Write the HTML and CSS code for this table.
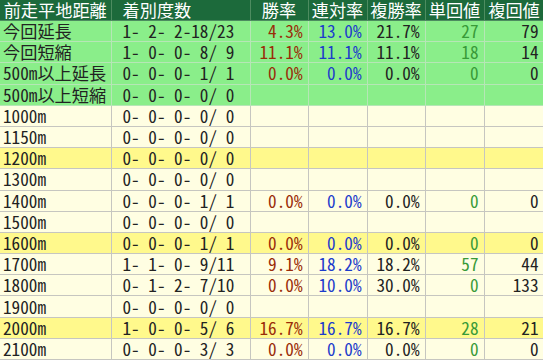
FILE: index.html
```html
<!DOCTYPE html>
<html lang="ja">
<head>
<meta charset="utf-8">
<title>前走平地距離</title>
<link rel="stylesheet" href="styles.css">
</head>
<body>
<table class="stats">
  <colgroup>
    <col class="c-label"><col class="c-rec"><col class="c-p1"><col class="c-p2"><col class="c-p3"><col class="c-v1"><col class="c-v2">
  </colgroup>
  <thead>
    <tr class="head">
      <th>前走平地距離</th><th class="rec-h">着別度数</th><th>勝率</th><th>連対率</th><th>複勝率</th><th>単回値</th><th>複回値</th>
    </tr>
  </thead>
  <tbody>
    <tr class="green"><td class="label">今回延長</td><td class="rec">1- 2- 2-18/23</td><td class="win">4.3%</td><td class="ren">13.0%</td><td class="fuku">21.7%</td><td class="tan">27</td><td class="fv">79</td></tr>
    <tr class="green"><td class="label">今回短縮</td><td class="rec">1- 0- 0- 8/ 9</td><td class="win">11.1%</td><td class="ren">11.1%</td><td class="fuku">11.1%</td><td class="tan">18</td><td class="fv">14</td></tr>
    <tr class="green"><td class="label">500m以上延長</td><td class="rec">0- 0- 0- 1/ 1</td><td class="win">0.0%</td><td class="ren">0.0%</td><td class="fuku">0.0%</td><td class="tan">0</td><td class="fv">0</td></tr>
    <tr class="green"><td class="label">500m以上短縮</td><td class="rec">0- 0- 0- 0/ 0</td><td></td><td></td><td></td><td></td><td></td></tr>
    <tr class="light"><td class="label">1000m</td><td class="rec">0- 0- 0- 0/ 0</td><td></td><td></td><td></td><td></td><td></td></tr>
    <tr class="light"><td class="label">1150m</td><td class="rec">0- 0- 0- 0/ 0</td><td></td><td></td><td></td><td></td><td></td></tr>
    <tr class="hi"><td class="label">1200m</td><td class="rec">0- 0- 0- 0/ 0</td><td></td><td></td><td></td><td></td><td></td></tr>
    <tr class="light"><td class="label">1300m</td><td class="rec">0- 0- 0- 0/ 0</td><td></td><td></td><td></td><td></td><td></td></tr>
    <tr class="light"><td class="label">1400m</td><td class="rec">0- 0- 0- 1/ 1</td><td class="win">0.0%</td><td class="ren">0.0%</td><td class="fuku">0.0%</td><td class="tan">0</td><td class="fv">0</td></tr>
    <tr class="light"><td class="label">1500m</td><td class="rec">0- 0- 0- 0/ 0</td><td></td><td></td><td></td><td></td><td></td></tr>
    <tr class="hi"><td class="label">1600m</td><td class="rec">0- 0- 0- 1/ 1</td><td class="win">0.0%</td><td class="ren">0.0%</td><td class="fuku">0.0%</td><td class="tan">0</td><td class="fv">0</td></tr>
    <tr class="light"><td class="label">1700m</td><td class="rec">1- 1- 0- 9/11</td><td class="win">9.1%</td><td class="ren">18.2%</td><td class="fuku">18.2%</td><td class="tan">57</td><td class="fv">44</td></tr>
    <tr class="light"><td class="label">1800m</td><td class="rec">0- 1- 2- 7/10</td><td class="win">0.0%</td><td class="ren">10.0%</td><td class="fuku">30.0%</td><td class="tan">0</td><td class="fv">133</td></tr>
    <tr class="light"><td class="label">1900m</td><td class="rec">0- 0- 0- 0/ 0</td><td></td><td></td><td></td><td></td><td></td></tr>
    <tr class="hi"><td class="label">2000m</td><td class="rec">1- 0- 0- 5/ 6</td><td class="win">16.7%</td><td class="ren">16.7%</td><td class="fuku">16.7%</td><td class="tan">28</td><td class="fv">21</td></tr>
    <tr class="light"><td class="label">2100m</td><td class="rec">0- 0- 0- 3/ 3</td><td class="win">0.0%</td><td class="ren">0.0%</td><td class="fuku">0.0%</td><td class="tan">0</td><td class="fv">0</td></tr>
  </tbody>
</table>
</body>
</html>
```
FILE: styles.css
```css
html, body {
  margin: 0;
  padding: 0;
  background: #ffffff;
}

.stats {
  border-collapse: collapse;
  table-layout: fixed;
  width: 544px;
  height: 360px;
  font-family: "Noto Sans CJK JP", sans-serif;
  font-size: 17.2px;
  font-feature-settings: "hwid" 1;
  line-height: 20px;
  white-space: pre;
  color: #222222;
}

.c-label { width: 111px; }
.c-rec { width: 139px; }
.c-p1 { width: 58px; }
.c-p2 { width: 59px; }
.c-p3 { width: 58px; }
.c-v1 { width: 59px; }
.c-v2 { width: 60px; }

.stats th,
.stats td {
  padding: 0 5px 0 2px;
  border: 1px solid #c6c6c0;
  text-align: right;
  vertical-align: middle;
}

.stats .head th {
  background: #1c6a3b;
  color: #ffffff;
  font-weight: normal;
  text-align: center;
  padding: 0;
  border: 1px solid #4d8c60;
  border-top: none;
}

.stats .head th:first-child { border-left: none; }
.stats .head th.rec-h { text-align: left; padding-left: 11px; }

.stats td.label {
  text-align: left;
  padding-left: 3px;
  border-left: none;
}

.stats td.rec {
  text-align: left;
  padding-left: 11px;
}

.green td {
  background: #8aee8a;
  border-color: #b6e6b6;
}

.light td { background: #fffee2; }
.hi td { background: #fff98c; }

.win { color: #9a2c08; }
.ren { color: #1c3ccc; }
.fuku { color: #222222; }
.tan { color: #389a38; }
.fv { color: #222222; }
```
